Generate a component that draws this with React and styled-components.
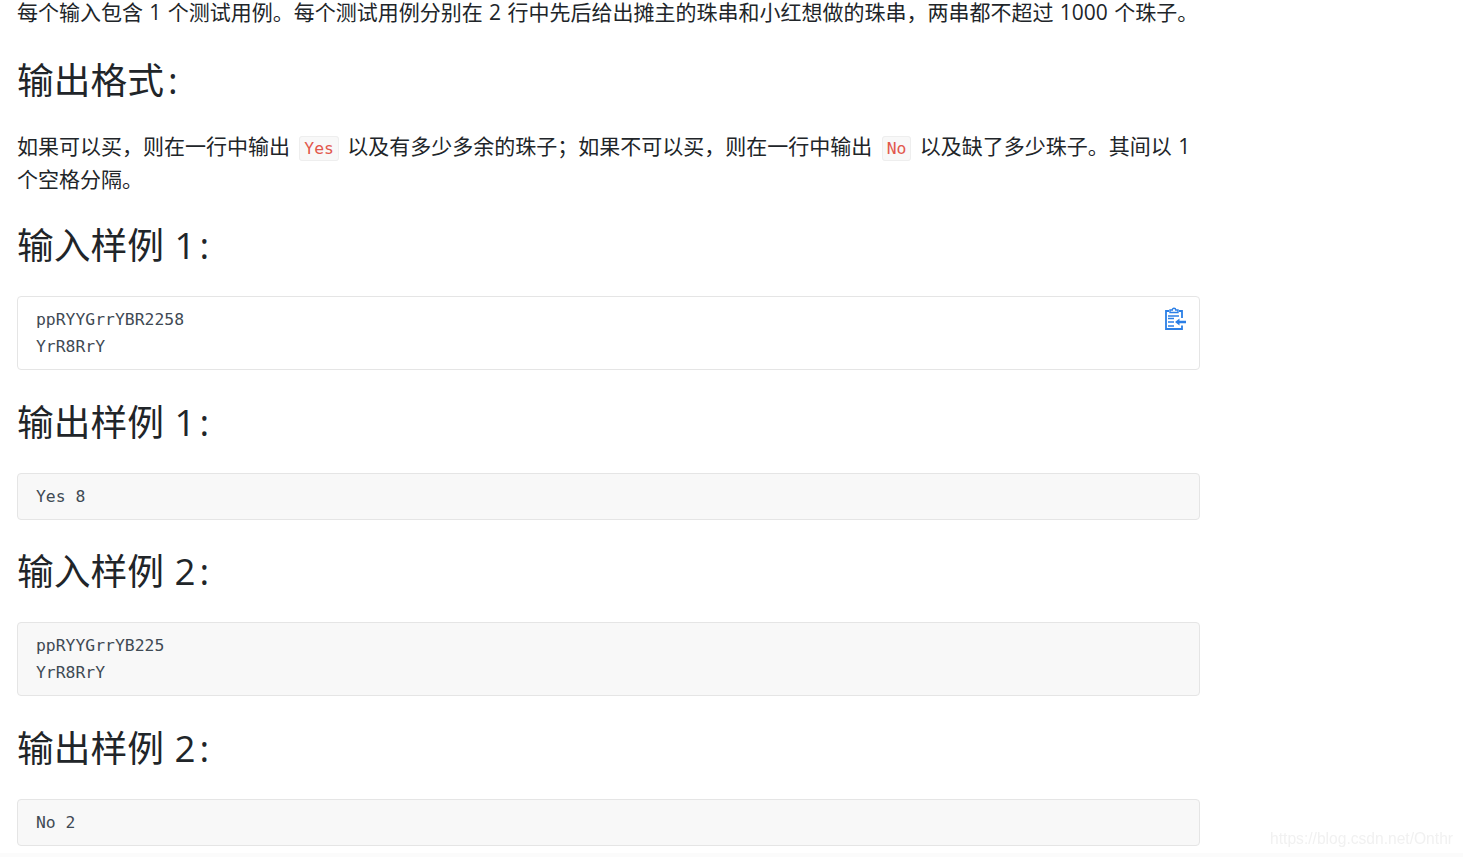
import React from 'react';
import styled, { createGlobalStyle } from 'styled-components';

const GlobalStyle = createGlobalStyle`
  html, body {
    margin: 0;
    padding: 0;
    height: 100%;
    overflow: hidden;
    background: #fff;
  }
`;

const Page = styled.main`
  box-sizing: border-box;
  width: 1217px;
  padding: 0 17px;
  color: #212529;
  font-family: 'Open Sans', 'Noto Sans CJK SC', sans-serif;
  font-size: 21px;
  line-height: 33px;
  word-spacing: 0.9px;
`;

const Paragraph = styled.p`
  margin: ${(p) => (p.$lead ? '0' : '-1px 0 -2px')};
  padding-bottom: ${(p) => (p.$lead ? '4px' : '0')};
  line-height: ${(p) => (p.$lead ? '24px' : '33px')};
`;

const Heading = styled.h2`
  margin: 29.5px 0 29px;
  font-size: 36.75px;
  font-weight: 400;
  line-height: 44px;
  word-spacing: 1px;
`;

const Colon = styled.span`
  margin-left: 4px;
`;

const InlineCode = styled.code`
  margin: 0 2px 0 3px;
  padding: 2px 4px;
  background: #f8f8f8;
  border: 1px solid #eeeeee;
  border-radius: 3px;
  color: #e2574c;
  font-family: 'DejaVu Sans Mono', monospace;
  font-size: 16.4px;
  line-height: 1;
  word-spacing: 0;
`;

const CodeBlock = styled.pre`
  position: relative;
  box-sizing: border-box;
  margin: 0;
  padding: 9px 18px;
  background: ${(p) => (p.$plain ? '#fff' : '#f8f8f8')};
  border: 1px solid #e5e5e5;
  border-radius: 4px;
  color: #3f4a54;
  font-family: 'DejaVu Sans Mono', monospace;
  font-size: 16.4px;
  line-height: 27px;
  word-spacing: 0;
`;

const CopyButton = styled.span`
  position: absolute;
  top: 10px;
  right: 13px;
  display: flex;
`;

const Watermark = styled.div`
  position: fixed;
  right: 10px;
  bottom: 8px;
  color: #f1f1f1;
  font-family: 'Liberation Sans', sans-serif;
  font-size: 15.6px;
  line-height: 20px;
`;

const BottomEdge = styled.div`
  position: fixed;
  left: 0;
  right: 0;
  bottom: 0;
  height: 4px;
  background: #fbfbfb;
`;

const CopyIcon = () => (
  <svg width="22" height="24" viewBox="0 0 22 24" fill="none">
    <path d="M5 4H2v18h16v-3.500M18 11V4h-3" stroke="#2b7fe6" strokeWidth="1.800" />
    <path d="M6 5.500V3h2.300a1.700 1.700 0 0 1 3.400 0H14v2.500z" fill="#fff" stroke="#2b7fe6" strokeWidth="1.400" />
    <path d="M4 9h11M4 11.500h6M4 15h6M4 19h6" stroke="#2b7fe6" strokeWidth="1.300" />
    <path d="M22 13.800h-6.500V11.500L11 15l4.500 3.500v-2.300H22z" fill="#2b7fe6" />
  </svg>
);

export default function App() {
  return (
    <>
      <GlobalStyle />
      <Page>
        <Paragraph $lead>每个输入包含 1 个测试用例。每个测试用例分别在 2 行中先后给出摊主的珠串和小红想做的珠串，两串都不超过 1000 个珠子。</Paragraph>
        <Heading>输出格式<Colon>:</Colon></Heading>
        <Paragraph>
          如果可以买，则在一行中输出 <InlineCode>Yes</InlineCode> 以及有多少多余的珠子；如果不可以买，则在一行中输出 <InlineCode>No</InlineCode> 以及缺了多少珠子。其间以 1 个空格分隔。
        </Paragraph>
        <Heading>输入样例 1<Colon>:</Colon></Heading>
        <CodeBlock $plain>
          {'ppRYYGrrYBR2258\nYrR8RrY'}
          <CopyButton><CopyIcon /></CopyButton>
        </CodeBlock>
        <Heading>输出样例 1<Colon>:</Colon></Heading>
        <CodeBlock>Yes 8</CodeBlock>
        <Heading>输入样例 2<Colon>:</Colon></Heading>
        <CodeBlock>{'ppRYYGrrYB225\nYrR8RrY'}</CodeBlock>
        <Heading>输出样例 2<Colon>:</Colon></Heading>
        <CodeBlock>No 2</CodeBlock>
      </Page>
      <BottomEdge />
      <Watermark>https://blog.csdn.net/Onthr</Watermark>
    </>
  );
}
